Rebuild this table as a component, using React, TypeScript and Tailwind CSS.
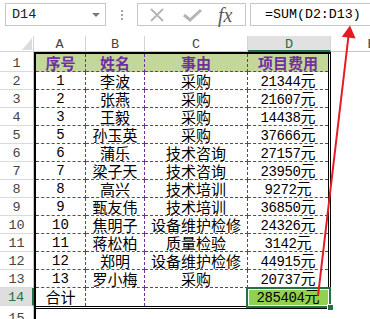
const mono = "font-['Liberation_Mono',monospace]";
const cjk = "font-['Noto_Sans_CJK_SC',sans-serif]";

const rows = [
  ["1", "李波", "采购", "21344"],
  ["2", "张燕", "采购", "21607"],
  ["3", "王毅", "采购", "14438"],
  ["5", "孙玉英", "采购", "37666"],
  ["6", "蒲乐", "技术咨询", "27157"],
  ["7", "梁子天", "技术咨询", "23950"],
  ["8", "高兴", "技术培训", "9272"],
  ["9", "甄友伟", "技术培训", "36850"],
  ["10", "焦明子", "设备维护检修", "24326"],
  ["11", "蒋松柏", "质量检验", "3142"],
  ["12", "郑明", "设备维护检修", "44915"],
  ["13", "罗小梅", "采购", "20737"],
];

function Money({ v }: { v: string }) {
  return (
    <span className="flex items-baseline leading-[16px]">
      <span className={`${mono} text-[14px] tracking-[-0.4px]`}>{v}</span>
      <span className={`${cjk} text-[15px]`}>元</span>
    </span>
  );
}

function FormulaBar() {
  return (
    <div className="flex h-[36px] items-start pt-[3px]">
      <div className="ml-[5px] flex h-[23px] w-[101px] shrink-0 items-center justify-between border border-[#c6c6c6] pl-[6px] pr-[5px]">
        <span className={`${mono} text-[13.5px] leading-[16px] text-[#222]`}>D14</span>
        <span className="h-0 w-0 border-x-[4px] border-t-[4px] border-x-transparent border-t-[#7a7a7a]" />
      </div>
      <div className="flex h-[23px] w-[31px] shrink-0 flex-col items-center justify-center gap-[2px]">
        <span className="h-[2px] w-[2px] bg-[#a6a6a6]" />
        <span className="h-[2px] w-[2px] bg-[#a6a6a6]" />
        <span className="h-[2px] w-[2px] bg-[#a6a6a6]" />
      </div>
      <div className="flex h-[23px] w-[109px] shrink-0 items-center border border-[#c6c6c6]">
        <svg className="ml-[11px]" width="16" height="16" viewBox="0 0 16 16">
          <path d="M2 2 L14 14 M14 2 L2 14" stroke="#b4b4b4" strokeWidth="1.8" fill="none" />
        </svg>
        <svg className="ml-[17px]" width="21" height="14" viewBox="0 0 21 14">
          <path d="M2 7 L8 12 L19 2" stroke="#b4b4b4" strokeWidth="3" fill="none" />
        </svg>
        <span className="ml-[15px] font-['Liberation_Serif',serif] text-[20px] italic leading-none text-[#5a5a5a]">
          fx
        </span>
      </div>
      <div className="ml-[4px] flex h-[23px] w-[160px] shrink-0 items-center border border-[#c6c6c6] pl-[14px]">
        <span className={`${mono} text-[13.3px] leading-[16px] text-black`}>=SUM(D2:D13)</span>
      </div>
    </div>
  );
}

function ColHead({ w, label, active }: { w: string; label: string; active?: boolean }) {
  return (
    <div
      className={`${w} flex shrink-0 items-center justify-center border-r border-[#d4d4d4] pt-[2px] ${mono} text-[13.5px] leading-[13px] ${
        active ? "border-b-2 border-b-[#217346] bg-[#e1e1e1] text-[#217346]" : "border-b border-b-[#c6c6c6] text-[#444]"
      }`}
    >
      {label}
    </div>
  );
}

function HeaderRow() {
  return (
    <div className="flex h-[16px]">
      <div className="flex w-[34px] shrink-0 items-end justify-end border-r border-b border-[#d4d4d4] pb-[1px] pr-[1px]">
        <svg width="10" height="12" viewBox="0 0 10 12">
          <polygon points="10,0 10,12 0,12" fill="#dcdcdc" />
        </svg>
      </div>
      <ColHead w="w-[52px]" label="A" />
      <ColHead w="w-[59px]" label="B" />
      <ColHead w="w-[103px]" label="C" />
      <ColHead w="w-[83px]" label="D" active />
      <ColHead w="w-[82px]" label="E" />
    </div>
  );
}

function RowHead({ n, active }: { n: number; active?: boolean }) {
  return (
    <div
      className={`flex h-[18px] items-center justify-center border-b border-[#dadada] pt-[1px] ${mono} text-[13.5px] leading-[15px] ${
        active ? "border-r-2 border-r-[#217346] bg-[#dedede] text-[#217346]" : "border-r border-r-[#c6c6c6] text-[#444]"
      }`}
    >
      {n}
    </div>
  );
}

const dash = "border-dashed border-[#7030a0]";

function Table() {
  return (
    <div className="w-[297px] shrink-0 border-l-2 border-t-2 border-black">
      <div className="border-b-[3px] border-r-[3px] border-double border-black">
        <div className={`flex h-[18px] bg-[#c4d79b] text-[15px] font-bold leading-[16px] text-[#7030a0] ${cjk}`}>
          <div className={`flex w-[50px] items-center justify-center border-r border-b ${dash}`}>序号</div>
          <div className={`flex w-[59px] items-center justify-center border-r border-b ${dash}`}>姓名</div>
          <div className={`flex w-[103px] items-center justify-center border-r border-b ${dash}`}>事由</div>
          <div className={`flex w-[80px] items-center justify-center border-b ${dash}`}>项目费用</div>
        </div>
        {rows.map((r) => (
          <div key={r[0]} className="flex h-[18px] leading-[16px] text-black">
            <div className={`flex w-[50px] items-center justify-center border-r border-b pt-[1px] ${dash} ${mono} text-[14px]`}>
              {r[0]}
            </div>
            <div className={`flex w-[59px] items-center justify-center border-r border-b ${dash} ${cjk} text-[15px]`}>
              {r[1]}
            </div>
            <div className={`flex w-[103px] items-center justify-center border-r border-b ${dash} ${cjk} text-[15px]`}>
              {r[2]}
            </div>
            <div className={`flex w-[80px] items-center justify-center border-b ${dash}`}>
              <Money v={r[3]} />
            </div>
          </div>
        ))}
        <div className="flex h-[18px] leading-[16px] text-black">
          <div className={`flex w-[50px] items-center justify-center border-r ${dash} ${cjk} text-[15px]`}>合计</div>
          <div className={`w-[59px] border-r ${dash}`} />
          <div className={`w-[103px] border-r ${dash}`} />
          <div className="relative flex w-[80px] items-center justify-center bg-[#92d050]">
            <Money v="285404" />
            <div className="absolute -bottom-[2px] -left-[2px] -right-[3px] -top-[1px] border-2 border-[#217346] shadow-[inset_0_0_0_1px_white]" />
            <div className="absolute -bottom-[5px] -right-[6px] h-[7px] w-[7px] border border-white bg-[#217346]" />
          </div>
        </div>
      </div>
    </div>
  );
}

function Arrow() {
  return (
    <svg className="pointer-events-none absolute left-0 top-0" width="370" height="319" viewBox="0 0 370 319">
      <line x1="318" y1="296" x2="348.6" y2="35" stroke="#e41b22" strokeWidth="2" />
      <polygon points="350,25.5 341.8,36.8 355.7,38.4" fill="#e41b22" />
    </svg>
  );
}

export default function App() {
  return (
    <div className="relative h-[319px] w-[370px] overflow-hidden bg-white">
      <FormulaBar />
      <HeaderRow />
      <div className="flex">
        <div className="w-[34px] shrink-0">
          <div className="h-[2px] border-r border-[#c6c6c6]" />
          {Array.from({ length: 13 }, (_, i) => (
            <RowHead key={i} n={i + 1} />
          ))}
          <RowHead n={14} active />
          <div className="h-[3px] border-r border-[#c6c6c6]" />
          <RowHead n={15} />
        </div>
        <Table />
        <div className="flex-1" />
      </div>
      <Arrow />
    </div>
  );
}
